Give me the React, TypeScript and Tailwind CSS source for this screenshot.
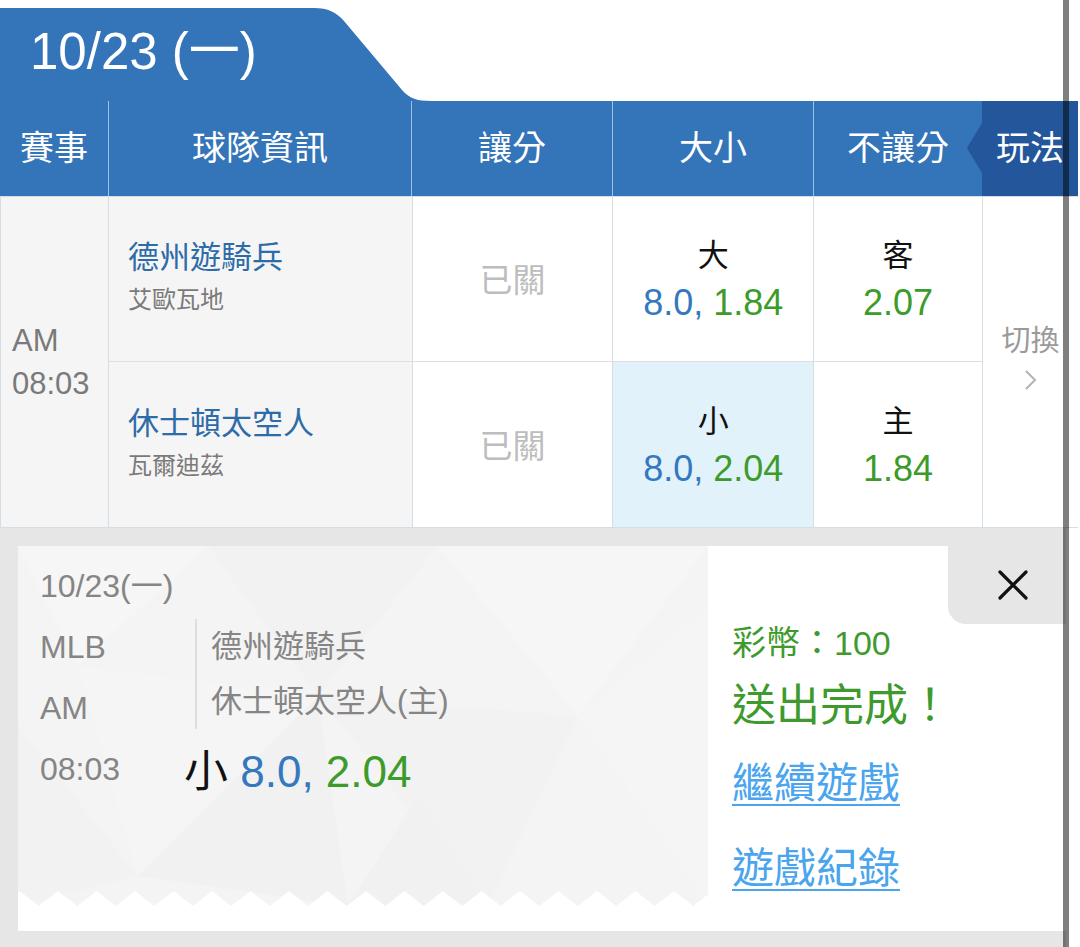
import React from 'react';

const teeth = Array.from({ length: 20 }, (_, i) => 1.5 + i * 38.5);

function CloseIcon() {
  return (
    <svg width="30" height="30" viewBox="0 0 30 30">
      <path d="M2 2 L28 28 M28 2 L2 28" stroke="#111" strokeWidth="3.2" strokeLinecap="round" />
    </svg>
  );
}

function Pattern() {
  // faint low-poly background of the ticket, plus the torn zigzag edge
  return (
    <svg className="absolute left-0 top-0" width="690" height="360" viewBox="0 0 690 360">
      <rect width="690" height="360" fill="#f4f4f4" />
      <polygon points="0,0 190,0 60,120" fill="#f6f6f6" />
      <polygon points="190,0 420,0 300,150" fill="#f2f2f2" />
      <polygon points="60,120 300,150 120,330" fill="#f5f5f5" />
      <polygon points="420,0 690,0 560,170" fill="#f6f6f6" />
      <polygon points="300,150 560,170 470,360" fill="#f2f2f2" />
      <polygon points="560,170 690,60 690,360" fill="#f5f5f5" />
      <polygon points="120,330 300,150 330,360" fill="#f1f1f1" />
      <polygon points="0,180 120,330 0,360" fill="#f2f2f2" />
      <polygon points="330,360 470,360 400,250" fill="#f1f1f1" />
      {teeth.map((cx) => (
        <polygon key={cx} points={`${cx - 19.25},360 ${cx},345 ${cx + 19.25},360`} fill="#ffffff" />
      ))}
    </svg>
  );
}

function Odds({ line, price }: { line: string; price: string }) {
  return (
    <div className="text-[36px] leading-[47px]">
      <span className="text-[#3478c0]">{line}, </span>
      <span className="text-[#3d9b2b]">{price}</span>
    </div>
  );
}

function MatchRow({
  team,
  pitcher,
  side,
  line,
  price,
  who,
  ml,
  picked,
  last,
}: {
  team: string;
  pitcher: string;
  side: string;
  line: string;
  price: string;
  who: string;
  ml: string;
  picked?: boolean;
  last?: boolean;
}) {
  return (
    <div className={`flex h-[166px] ${last ? '' : 'border-b border-[#dcdfe3]'}`}>
      <div className="flex w-[303px] flex-col justify-center bg-[#f5f5f5] pl-[19px]">
        <div className="text-[31px] leading-[42px] text-[#2d6ca8]">{team}</div>
        <div className="text-[24px] leading-[42px] text-[#7a7a7a]">{pitcher}</div>
      </div>
      <div className="flex w-[201px] items-center justify-center border-l border-[#d5dde6] bg-white pt-[4px] text-[33px] text-[#bdbdbd]">
        已關
      </div>
      <div
        className={`flex w-[201px] flex-col items-center justify-center border-l border-[#d5dde6] ${
          picked ? 'bg-[#e1f2fb]' : 'bg-white'
        }`}
      >
        <div className="text-[31px] leading-[47px] text-[#111]">{side}</div>
        <Odds line={line} price={price} />
      </div>
      <div className="flex w-[169px] flex-col items-center justify-center border-l border-[#d5dde6] bg-white">
        <div className="text-[31px] leading-[47px] text-[#111]">{who}</div>
        <div className="text-[36px] leading-[47px] text-[#3d9b2b]">{ml}</div>
      </div>
    </div>
  );
}

export default function App() {
  return (
    <div className="relative h-[947px] w-[1080px] overflow-hidden bg-white font-['Liberation_Sans','Noto_Sans_CJK_TC',sans-serif]">
      {/* date tab */}
      <div className="relative mt-[8px] h-[93px] w-[432px]">
        <svg className="absolute inset-0" width="432" height="93" viewBox="0 0 432 93">
          <path d="M0 0 H314 C328 0 336 4 344 13 L402 82 C409 90 416 93 432 93 H0 Z" fill="#3474b8" />
        </svg>
        <div className="relative pl-[30px] pt-[14px] text-[51px] leading-[60px] text-white">10/23 (一)</div>
      </div>

      {/* header */}
      <div className="flex h-[95px] w-[1078px] bg-[#3474b8] text-[34px] text-white">
        <div className="flex w-[108px] items-center justify-center">賽事</div>
        <div className="flex w-[303px] items-center justify-center border-l border-[#9cbfe3]">球隊資訊</div>
        <div className="flex w-[201px] items-center justify-center border-l border-[#9cbfe3]">讓分</div>
        <div className="flex w-[201px] items-center justify-center border-l border-[#9cbfe3]">大小</div>
        <div className="flex w-[169px] items-center justify-center border-l border-[#9cbfe3]">不讓分</div>
        <div className="relative flex flex-1 items-center justify-center bg-[#23569b]">
          <svg className="absolute left-[-15px] top-[22px]" width="15" height="50" viewBox="0 0 15 50">
            <path d="M15 0 L0 25 L15 50 Z" fill="#23569b" />
          </svg>
          玩法
        </div>
      </div>

      {/* match */}
      <div className="flex h-[332px] w-[1078px] border-b border-t border-[#d5dde6]">
        <div className="flex w-[108px] flex-col justify-center border-l border-[#d5dde6] bg-[#f5f5f5] pl-[11px] text-[31px] leading-[43px] text-[#7a7a7a]">
          <div>AM</div>
          <div>08:03</div>
        </div>
        <div className="flex w-[874px] flex-col border-l border-[#d5dde6]">
          <MatchRow team="德州遊騎兵" pitcher="艾歐瓦地" side="大" line="8.0" price="1.84" who="客" ml="2.07" />
          <MatchRow
            team="休士頓太空人"
            pitcher="瓦爾迪茲"
            side="小"
            line="8.0"
            price="2.04"
            who="主"
            ml="1.84"
            picked
            last
          />
        </div>
        <div className="flex flex-1 flex-col items-center justify-center border-l border-[#d5dde6] pb-[14px] text-[#9a9a9a]">
          <div className="text-[29px] leading-[44px]">切換</div>
          <svg width="14" height="22" viewBox="0 0 14 22" className="mt-[6px]">
            <path d="M2 2 L11 11 L2 20" fill="none" stroke="#b3b3b3" strokeWidth="2" />
          </svg>
        </div>
      </div>

      {/* bet slip */}
      <div className="h-[419px] w-[1066px] bg-[#e6e6e6] pl-[18px] pt-[18px]">
        <div className="flex h-[385px] bg-white">
          <div className="relative h-full w-[690px]">
            <Pattern />
            <div className="relative pl-[22px] pt-[20px] text-[#858585]">
              <div className="text-[32px] leading-[40px]">10/23(一)</div>
              <div className="mt-[11px] flex">
                <div className="w-[144px] text-[32px] leading-[61px]">
                  <div>MLB</div>
                  <div>AM</div>
                  <div>08:03</div>
                </div>
                <div className="flex flex-col">
                  <div className="ml-[11px] mt-[2px] border-l-2 border-[#dedede] pl-[14px] text-[31px] leading-[55px]">
                    <div>德州遊騎兵</div>
                    <div>休士頓太空人(主)</div>
                  </div>
                  <div className="text-[44px] leading-[86px]">
                    <span className="text-[#111]">小 </span>
                    <span className="text-[#3478c0]">8.0, </span>
                    <span className="text-[#3d9b2b]">2.04</span>
                  </div>
                </div>
              </div>
            </div>
          </div>
          <div className="relative flex-1 pl-[24px] pt-[72px]">
            <div className="absolute right-0 top-0 flex h-[78px] w-[118px] items-center rounded-bl-[18px] bg-[#e6e6e6] pl-[50px]">
              <CloseIcon />
            </div>
            <div className="text-[34px] leading-[50px] text-[#3e9a2c]">彩幣：100</div>
            <div className="text-[44px] leading-[76px] text-[#3e9a2c]">送出完成！</div>
            <div className="mt-[10px] text-[42px] leading-[60px] text-[#4aa5ee] underline decoration-2 underline-offset-[6px]">
              繼續遊戲
            </div>
            <div className="mt-[25px] text-[42px] leading-[60px] text-[#4aa5ee] underline decoration-2 underline-offset-[6px]">
              遊戲紀錄
            </div>
          </div>
        </div>
      </div>

      {/* scroll bar */}
      <div className="absolute left-[1063px] top-0 h-[947px] w-[6px] bg-black/50" />
    </div>
  );
}
